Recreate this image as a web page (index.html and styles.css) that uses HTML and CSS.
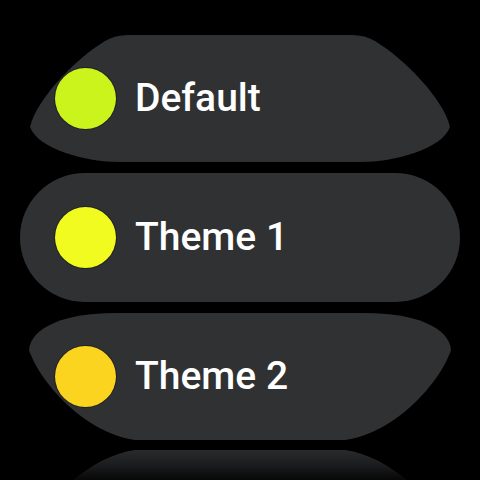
FILE: index.html
```html
<!DOCTYPE html>
<html lang="en">
<head>
<meta charset="utf-8">
<title>Themes</title>
<link rel="stylesheet" href="styles.css">
</head>
<body>
<div class="screen">
  <div class="list">
    <div class="chip chip-top">
      <span class="swatch swatch-default"></span>
      <span class="label">Default</span>
    </div>
    <div class="chip chip-mid">
      <span class="swatch swatch-theme1"></span>
      <span class="label">Theme 1</span>
    </div>
    <div class="chip chip-bottom">
      <span class="swatch swatch-theme2"></span>
      <span class="label">Theme 2</span>
    </div>
    <div class="chip chip-peek"></div>
  </div>
</div>
</body>
</html>
```

FILE: styles.css
```css
html, body {
  margin: 0;
  padding: 0;
  background: #000;
}

.screen {
  width: 480px;
  height: 480px;
  overflow: hidden;
  background: #000;
  font-family: Roboto, "Noto Sans", "Liberation Sans", sans-serif;
}

.list {
  display: flex;
  flex-direction: column;
  gap: 11px;
  padding: 35px 20px 0;
}

.chip {
  flex: none;
  height: 127px;
  background: #303133;
  display: flex;
  align-items: center;
  gap: 19px;
  padding-left: 35px;
  box-sizing: border-box;
}

.chip-top {
  clip-path: path("M 108 0 L 332 0 Q 345 0 355 6 C 385 24 424 65 430 92 C 422 114 375 127 340 127 L 100 127 C 65 127 18 114 10 92 C 16 65 55 24 85 6 Q 95 0 108 0 Z");
}

.chip-mid {
  height: 129px;
  border-radius: 64.5px;
}

.chip-bottom {
  clip-path: path("M 95 0 L 345 0 C 395 0 429 14 431 37 C 420 70 375 120 325 127 L 115 127 C 65 120 20 70 9 37 C 11 14 45 0 95 0 Z");
}

.chip-peek {
  margin-top: -1px;
  background: linear-gradient(to bottom, #2a2b2d 0, #1a1b1c 16px, #070707 30px);
  clip-path: path("M 115 0 L 325 0 C 375 7 420 57 430 90 C 422 114 375 127 340 127 L 100 127 C 65 127 18 114 10 90 C 20 57 65 7 115 0 Z");
}

.swatch {
  flex: none;
  width: 61px;
  height: 61px;
  border-radius: 50%;
  box-shadow: 0 0 0 1px rgba(0, 0, 0, 0.35);
}

.swatch-default { background: #cbf41c; }
.swatch-theme1 { background: #f2fb20; }
.swatch-theme2 { background: #fbd420; }

.label {
  color: #fff;
  font-size: 39px;
  font-weight: 500;
  line-height: 1;
  white-space: nowrap;
}
```
